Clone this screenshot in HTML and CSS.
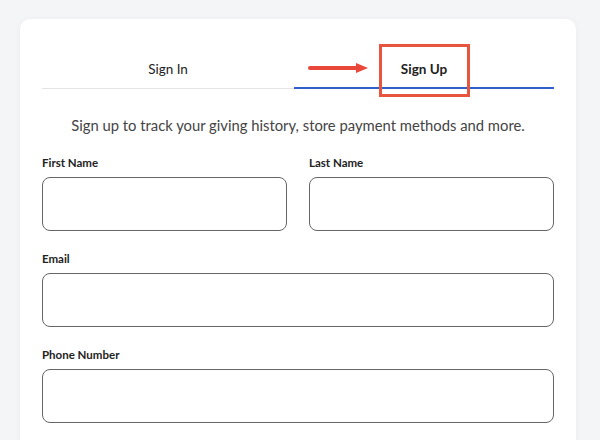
FILE: index.html
```html
<!DOCTYPE html>
<html lang="en">
<head>
    <meta charset="UTF-8">
    <meta name="viewport" content="width=device-width, initial-scale=1.0">
    <title>Sign Up</title>
    <link rel="stylesheet" href="styles.css">
</head>
<body>
    <div class="card">
        <div class="tabs">
            <div class="tab">Sign In</div>
            <div class="tab active">
                <svg class="arrow" width="62" height="12" viewBox="0 0 62 12">
                    <line x1="2" y1="6" x2="50" y2="6" stroke="#e8473a" stroke-width="4" stroke-linecap="round"/>
                    <polygon points="48,1 60,6 48,11" fill="#e8473a"/>
                </svg>
                Sign Up
                <div class="highlight"></div>
            </div>
        </div>
        <p class="intro">Sign up to track your giving history, store payment methods and more.</p>
        <form class="fields">
            <label class="field">
                <span>First Name</span>
                <input type="text">
            </label>
            <label class="field">
                <span>Last Name</span>
                <input type="text">
            </label>
            <label class="field wide">
                <span>Email</span>
                <input type="email">
            </label>
            <label class="field wide">
                <span>Phone Number</span>
                <input type="tel">
            </label>
        </form>
    </div>
</body>
</html>
```

FILE: styles.css
```css
body {
    margin: 0;
    background: #f4f5f7;
    font-family: Lato, Arial, sans-serif;
    color: #222;
}
.card {
    margin: 19px 24px 0 20px;
    padding: 24px 22px 30px 22px;
    background: #fff;
    border-radius: 10px;
    box-shadow: 0 0 6px rgba(0, 0, 0, 0.04);
    height: 500px;
}
.tabs {
    display: flex;
    align-items: flex-start;
}
.tab {
    flex: 0 0 252px;
    position: relative;
    text-align: center;
    font-size: 13.5px;
    line-height: 20px;
    padding: 16px 0 9px;
    border-bottom: 1px solid #e4e4e4;
}
.tab.active {
    flex: 1;
    font-weight: 700;
    padding-bottom: 8px;
    border-bottom: 2px solid #2f5fcb;
}
.arrow {
    position: absolute;
    left: 14px;
    top: 19px;
}
.highlight {
    position: absolute;
    left: 85px;
    top: 1px;
    width: 85px;
    height: 47px;
    border: 3px solid #e8553f;
}
.intro {
    margin: 26px 0 21px;
    text-align: center;
    font-size: 14.8px;
    line-height: 20px;
    color: #444;
}
.fields {
    display: grid;
    grid-template-columns: 1fr 1fr;
    column-gap: 22px;
    row-gap: 21px;
}
.field {
    display: flex;
    flex-direction: column;
}
.field.wide {
    grid-column: 1 / 3;
}
.field span {
    font-size: 11.5px;
    font-weight: 700;
    line-height: 14px;
    margin-bottom: 7px;
}
.field input {
    height: 54px;
    box-sizing: border-box;
    border: 1px solid #666;
    border-radius: 8px;
    padding: 0 12px;
    font-size: 14px;
}
```
